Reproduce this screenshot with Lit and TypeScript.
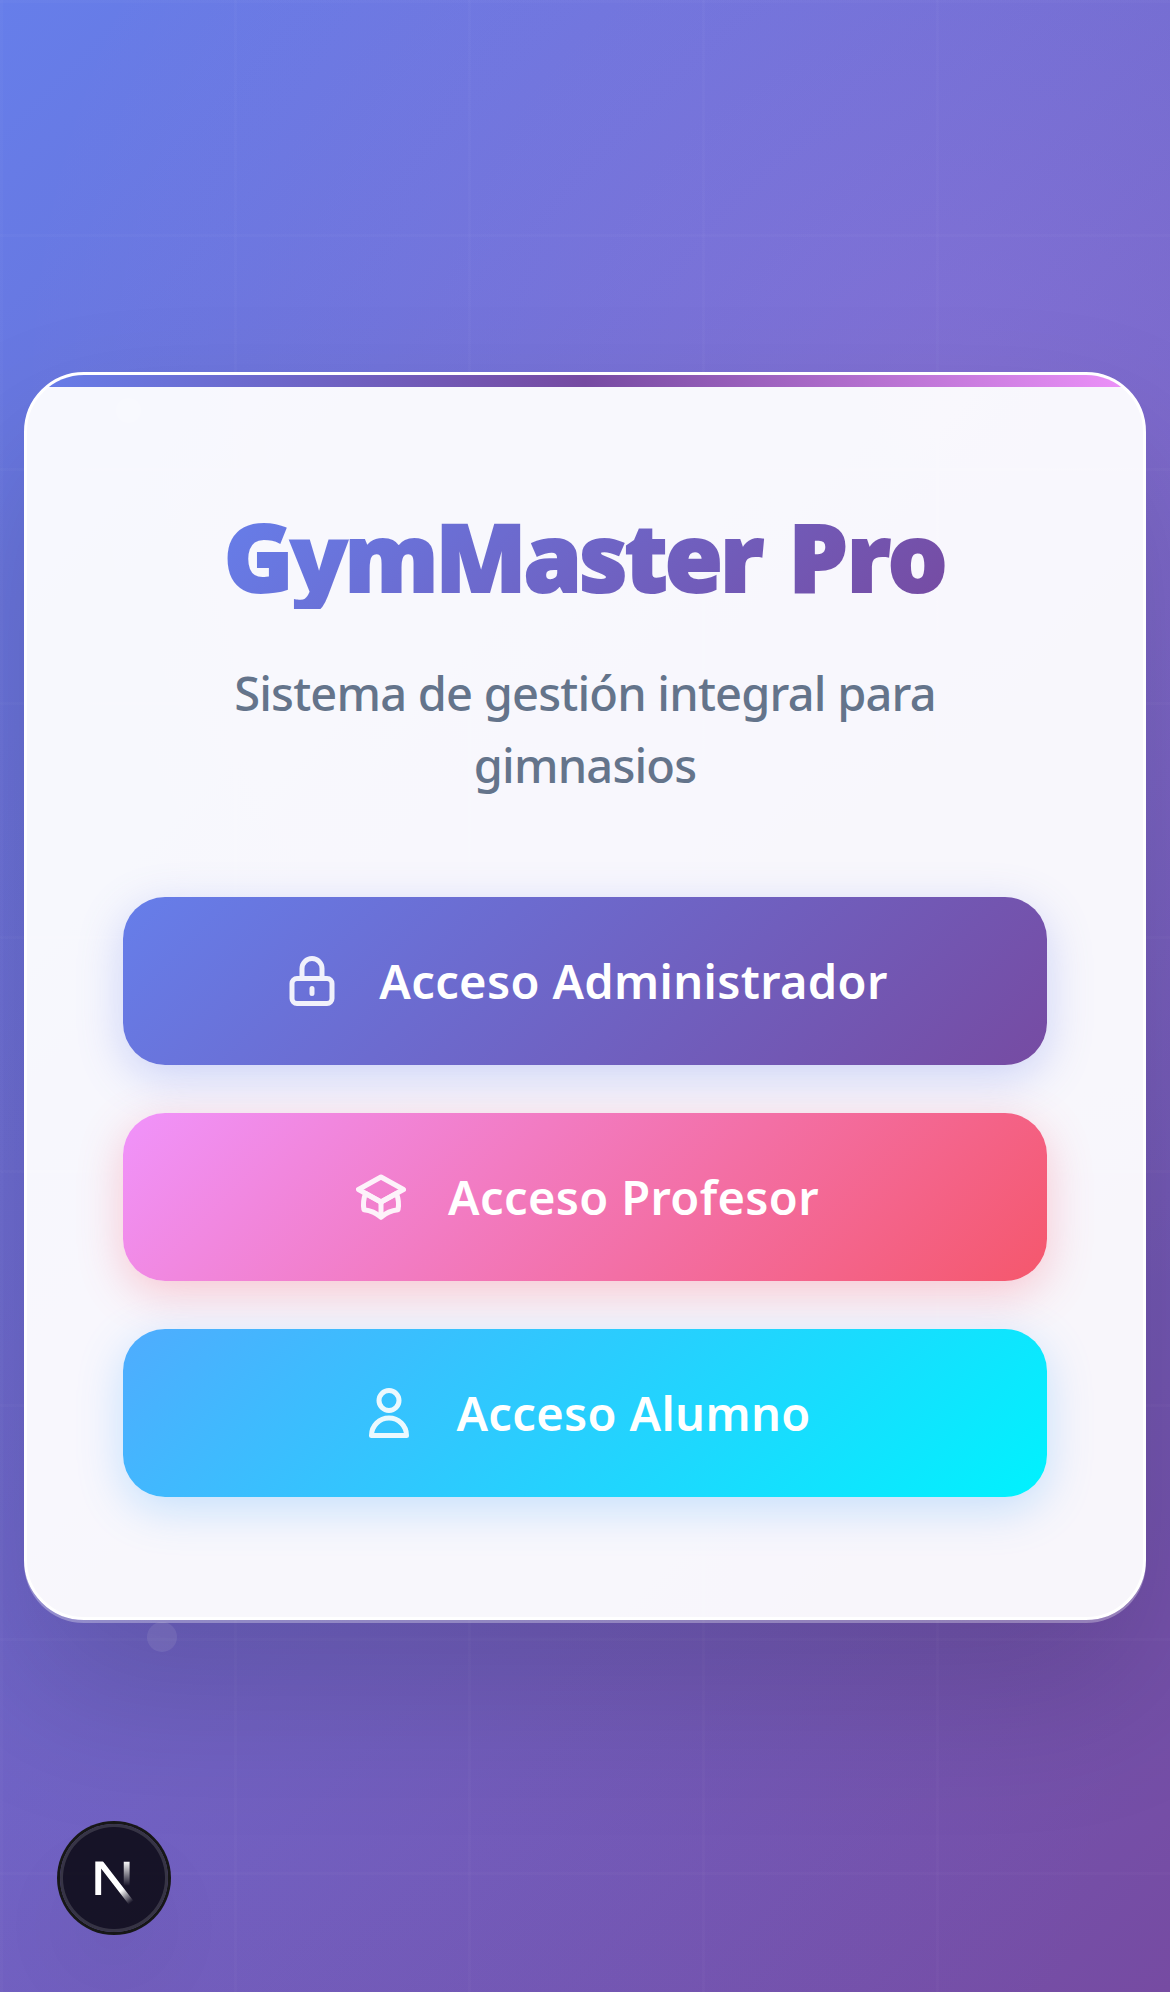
import { LitElement, html, css, svg } from "lit";
import { customElement } from "lit/decorators.js";

const lock = svg`<path d="M12 15v2m-6 4h12a2 2 0 002-2v-6a2 2 0 00-2-2H6a2 2 0 00-2 2v6a2 2 0 002 2zm10-10V7a4 4 0 00-8 0v4h8z"></path>`;
const cap = svg`<path d="M12 14l9-5-9-5-9 5 9 5z"></path><path d="M12 14l6.16-3.422a12.083 12.083 0 01.665 6.479A11.952 11.952 0 0012 20.055a11.952 11.952 0 00-6.824-2.998 12.078 12.078 0 01.665-6.479L12 14z"></path><path d="M12 14v6"></path>`;
const user = svg`<path d="M16 7a4 4 0 11-8 0 4 4 0 018 0zM12 14a7 7 0 00-7 7h14a7 7 0 00-7-7z"></path>`;

const accesses = [
  { kind: "admin", label: "Acceso Administrador", icon: lock },
  { kind: "teacher", label: "Acceso Profesor", icon: cap },
  { kind: "student", label: "Acceso Alumno", icon: user },
];

@customElement("app-root")
export class AppRoot extends LitElement {
  static styles = css`
    :host {
      display: block;
      font-family: "Segoe UI", "Noto Sans", "Open Sans", sans-serif;
    }
    * { box-sizing: border-box; }
    .page {
      position: relative;
      display: flex;
      align-items: center;
      height: 1992px;
      padding: 0 24px;
      overflow: hidden;
      background:
        repeating-linear-gradient(90deg, rgba(255,255,255,.018) 0 3px, transparent 3px 234px),
        repeating-linear-gradient(180deg, rgba(255,255,255,.018) 0 3px, transparent 3px 234px),
        radial-gradient(circle at 80% 20%, rgba(240,147,251,.15), transparent 50%),
        radial-gradient(circle at 20% 80%, rgba(120,119,234,.15), transparent 50%),
        linear-gradient(135deg, #667eea 0%, #764ba2 100%);
    }
    .dot {
      position: absolute;
      border-radius: 50%;
      background: rgba(255,255,255,.1);
    }
    .dot.a { left: 116px; top: 398px; width: 25px; height: 25px; }
    .dot.b { left: 147px; top: 1622px; width: 30px; height: 30px; }
    .card {
      position: relative;
      width: 100%;
      height: 1248px;
      padding: 128px 96px 0;
      border: 3px solid #fff;
      border-radius: 60px;
      background: rgba(255,255,255,.95);
      box-shadow: 0 3px 0 rgba(255,255,255,.3), 0 75px 150px rgba(0,0,0,.15);
      overflow: hidden;
      text-align: center;
    }
    .stripe {
      position: absolute;
      inset: 0 0 auto;
      height: 12px;
      background: linear-gradient(90deg, #667eea, #764ba2 50%, #f093fb);
    }
    .title {
      margin: 0 auto 48px;
      width: max-content;
      font-size: 94px;
      line-height: 106px;
      font-weight: 900;
      letter-spacing: -3px;
      word-spacing: 6px;
      color: transparent;
      background: linear-gradient(135deg, #667eea, #764ba2);
      -webkit-background-clip: text;
      background-clip: text;
      -webkit-text-stroke: 2px transparent;
    }
    .wide { letter-spacing: -1.2px; }
    .subtitle {
      margin: 0 0 96px;
      font-size: 47px;
      line-height: 72px;
      font-weight: 500;
      letter-spacing: -.8px;
      color: #64748b;
    }
    .actions { display: flex; flex-direction: column; gap: 48px; }
    .access {
      display: flex;
      align-items: center;
      justify-content: center;
      gap: 37px;
      height: 168px;
      border: 0;
      padding: 0;
      border-radius: 42px;
      color: #fff;
      font: 600 47px/72px "Segoe UI", "Noto Sans", "Open Sans", sans-serif;
      letter-spacing: .35px;
    }
    .admin { background: linear-gradient(135deg, #667eea, #764ba2); box-shadow: 0 12px 45px rgba(102,126,234,.3); }
    .teacher { background: linear-gradient(135deg, #f093fb, #f5576c); box-shadow: 0 12px 45px rgba(245,87,108,.3); }
    .student { background: linear-gradient(135deg, #4facfe, #00f2fe); box-shadow: 0 12px 45px rgba(79,172,254,.3); }
    .icon {
      width: 60px;
      height: 60px;
      opacity: .9;
      fill: none;
      stroke: currentColor;
      stroke-width: 2;
      stroke-linecap: round;
      stroke-linejoin: round;
    }
    .badge {
      position: absolute;
      left: 60px;
      top: 1824px;
      width: 108px;
      height: 108px;
      border-radius: 50%;
      background: rgba(0,0,0,.8);
      box-shadow: 0 0 0 3px #171717, inset 0 0 0 3px rgba(255,255,255,.14), 0 48px 96px -24px rgba(0,0,0,.14);
    }
    .badge svg { display: block; width: 108px; height: 108px; }
  `;

  render() {
    return html`
      <main class="page">
        <i class="dot a"></i>
        <i class="dot b"></i>
        <section class="card">
          <div class="stripe"></div>
          <h1 class="title">GymMaster <span class="wide">Pro</span></h1>
          <p class="subtitle">Sistema de gestión integral para<br />gimnasios</p>
          <div class="actions">
            ${accesses.map(
              (a) => html`<button class="access ${a.kind}">
                <svg class="icon" viewBox="0 0 24 24">${a.icon}</svg><span>${a.label}</span>
              </button>`
            )}
          </div>
        </section>
        <div class="badge">
          <svg viewBox="0 0 36 36" fill="none">
            <defs>
              <linearGradient id="diag" x1="9.95555" y1="11.1226" x2="15.4778" y2="17.9671" gradientUnits="userSpaceOnUse">
                <stop stop-color="white"></stop>
                <stop offset="0.604072" stop-color="white" stop-opacity="0"></stop>
              </linearGradient>
              <linearGradient id="stem" x1="11.8222" y1="1.40039" x2="11.791" y2="9.62542" gradientUnits="userSpaceOnUse">
                <stop stop-color="white"></stop>
                <stop offset="1" stop-color="white" stop-opacity="0"></stop>
              </linearGradient>
              <clipPath id="flat"><rect x="0" y="1.5" width="20" height="18"></rect></clipPath>
            </defs>
            <g transform="translate(10.4 11)" stroke-width="1.95" clip-path="url(#flat)">
              <path d="M13.3 15.2 L2.34 1 V12.7" stroke="url(#diag)"></path>
              <path d="M11.825 1.5 V13.1" stroke="url(#stem)"></path>
            </g>
          </svg>
        </div>
      </main>
    `;
  }
}
